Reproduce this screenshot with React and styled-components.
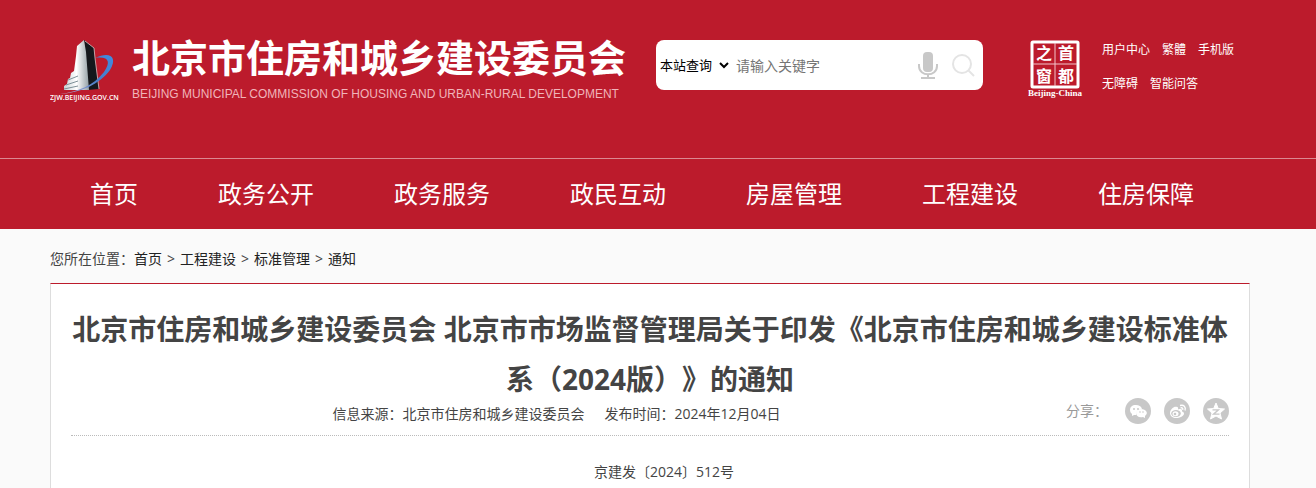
import styled, { createGlobalStyle } from "styled-components";

const navItems = ["首页", "政务公开", "政务服务", "政民互动", "房屋管理", "工程建设", "住房保障"];
const crumbs = ["首页", "工程建设", "标准管理", "通知"];
const quickLinks = [
    ["用户中心", "繁體", "手机版"],
    ["无障碍", "智能问答"],
];

function Logo() {
    return (
        <svg width="72" height="64" viewBox="0 0 72 64" role="img" aria-label="ZJW.BEIJING.GOV.CN">
            <defs>
                <linearGradient id="face" x1="0" y1="0" x2="1" y2="0">
                    <stop offset="0" stopColor="#c9d2d5" />
                    <stop offset="0.5" stopColor="#ffffff" />
                    <stop offset="1" stopColor="#93a0a5" />
                </linearGradient>
                <linearGradient id="orbit" x1="0" y1="1" x2="1" y2="0">
                    <stop offset="0" stopColor="#c3b6dc" />
                    <stop offset="0.5" stopColor="#4a7cc6" />
                    <stop offset="1" stopColor="#3f8be0" />
                </linearGradient>
            </defs>
            <path d="M34 0 L44 8 L45 18 L49 49 L37 50 Z" fill="#14181c" />
            <path d="M34 0 L36 12 L39 50 L14 50 L14 46 L17 44 L18 39 L20 38 L21 33 L24 31 L26 16 L27 6 Z" fill="url(#face)" />
            <path d="M35 1 L44 8 L45 18 L49 49" fill="none" stroke="#dcc3c5" strokeWidth="0.8" />
            <path d="M18 40 L28 36 M16 45 L28 41 M14 49 L28 46" stroke="#7e9198" strokeWidth="1" />
            <path
                d="M10 54 C28 52 44 45 54 32 C61 22 59 16 45 18 C60 11 68 17 60 30 C50 44 30 53 10 54 Z"
                fill="url(#orbit)"
            />
            <text x="0" y="60" fontSize="7" fontFamily="Open Sans, Liberation Sans, sans-serif" fontWeight="600" fill="#fff">
                ZJW.BEIJING.GOV.CN
            </text>
        </svg>
    );
}

function Seal() {
    return (
        <svg width="56" height="58" viewBox="0 0 56 58" role="img" aria-label="首都之窗">
            <rect x="4" y="2" width="46" height="45" rx="1" fill="none" stroke="#fff" strokeWidth="3" />
            <path d="M27 3 V46 M5 24 H49" stroke="#f3c5ca" strokeWidth="1" />
            <SealText x="8" y="19">之</SealText>
            <SealText x="30" y="19">首</SealText>
            <SealText x="8" y="42">窗</SealText>
            <SealText x="30" y="42">都</SealText>
            <SealCaption x="0" y="56">Beijing-China</SealCaption>
        </svg>
    );
}

function MicIcon() {
    return (
        <svg width="20" height="27" viewBox="0 0 20 27" aria-hidden="true">
            <rect x="5" y="0" width="10" height="20" rx="4" fill="#c8c8c8" />
            <path d="M1 12 V14 C1 25 19 25 19 14 V12" fill="none" stroke="#c8c8c8" strokeWidth="2" />
            <path d="M10 22 V26 M3 26 H17" stroke="#c8c8c8" strokeWidth="2" />
        </svg>
    );
}

function SearchIcon() {
    return (
        <svg width="23" height="23" viewBox="0 0 23 23" fill="none" stroke="#e4e4e4" strokeWidth="2" aria-hidden="true">
            <circle cx="10" cy="10" r="9" />
            <path d="M16 16 L22 22" />
        </svg>
    );
}

function WechatIcon() {
    return (
        <svg width="26" height="26" viewBox="0 0 26 26" aria-hidden="true">
            <path d="M11 7 C7 7 5 9 5 12 C5 14 6 15 7 16 L7 18 L9 17 H11 C11 13 14 11 17 11 C16 8 14 7 11 7 Z" fill="#fff" />
            <path d="M16 11 C13 11 11 13 11 15 C11 18 14 20 18 19 L20 20 L20 18 C24 15 21 11 16 11 Z" fill="#fff" />
            <g fill="#c8c8c8">
                <circle cx="9" cy="11" r="1" />
                <circle cx="13" cy="11" r="1" />
                <circle cx="15" cy="14" r="0.8" />
                <circle cx="18" cy="14" r="0.8" />
            </g>
        </svg>
    );
}

function WeiboIcon() {
    return (
        <svg width="26" height="26" viewBox="0 0 26 26" aria-hidden="true">
            <path
                d="M12 9 C11 8 6 11 6 15 C6 18 9 20 12 20 C16 20 20 18 20 15.5 C20 14 18 13.5 18 13.5 C18.5 11 17 10.5 14 11.5 C14.5 9.5 13.5 8.5 12 9 Z"
                fill="#fff"
            />
            <ellipse cx="12" cy="15.5" rx="4.8" ry="3.4" fill="#c8c8c8" />
            <ellipse cx="11.5" cy="15.7" rx="3" ry="2.5" fill="#fff" />
            <circle cx="11" cy="16" r="1.3" fill="#c8c8c8" />
            <path d="M16 7.5 C20 6.5 22 9 21 12.5 M16.5 9.8 C18.5 9.5 19.2 10.5 18.7 12" fill="none" stroke="#fff" strokeWidth="1.3" />
        </svg>
    );
}

function QzoneIcon() {
    return (
        <svg width="26" height="26" viewBox="0 0 26 26" aria-hidden="true">
            <path
                d="M13 5 L15.3 10.5 L21.5 11 L17 15 L18.5 21 L13 18 L7.5 21 L9 15 L4.5 11 L10.7 10.5 Z"
                fill="#fff"
                stroke="#fff"
                strokeLinejoin="round"
            />
            <path d="M9.5 11.8 H15.5 L10.5 16.2 H16.5" fill="none" stroke="#c8c8c8" strokeWidth="1.3" />
        </svg>
    );
}

function App() {
    return (
        <>
            <GlobalStyle />
            <Header>
                <TopBar>
                    <Brand href="#">
                        <Logo />
                        <BrandText>
                            <BrandName>北京市住房和城乡建设委员会</BrandName>
                            <BrandEnglish>BEIJING MUNICIPAL COMMISSION OF HOUSING AND URBAN-RURAL DEVELOPMENT</BrandEnglish>
                        </BrandText>
                    </Brand>
                    <SearchForm>
                        <ScopeSelect aria-label="查询范围">
                            <option>本站查询</option>
                        </ScopeSelect>
                        <SearchInput type="text" aria-label="关键字" placeholder="请输入关键字" />
                        <IconButton type="button" aria-label="语音">
                            <MicIcon />
                        </IconButton>
                        <IconButton type="submit" aria-label="搜索">
                            <SearchIcon />
                        </IconButton>
                    </SearchForm>
                    <Portal>
                        <SealLink href="#">
                            <Seal />
                        </SealLink>
                        <QuickLinks>
                            {quickLinks.map((row) => (
                                <QuickRow key={row[0]}>
                                    {row.map((label) => (
                                        <a href="#" key={label}>{label}</a>
                                    ))}
                                </QuickRow>
                            ))}
                        </QuickLinks>
                    </Portal>
                </TopBar>
                <Nav>
                    {navItems.map((label) => (
                        <NavLink href="#" key={label}>{label}</NavLink>
                    ))}
                </Nav>
            </Header>
            <Main>
                <Breadcrumb aria-label="您所在位置">
                    <span>您所在位置：</span>
                    {crumbs.map((label) => (
                        <Crumb href="#" key={label}>{label}</Crumb>
                    ))}
                </Breadcrumb>
                <Article>
                    <Title>北京市住房和城乡建设委员会 北京市市场监督管理局关于印发《北京市住房和城乡建设标准体系（2024版）》的通知</Title>
                    <InfoBar>
                        <Meta>
                            <span>信息来源：北京市住房和城乡建设委员会</span>
                            <span>发布时间：2024年12月04日</span>
                        </Meta>
                        <Share>
                            <ShareLabel>分享：</ShareLabel>
                            <ShareButton type="button" aria-label="微信"><WechatIcon /></ShareButton>
                            <ShareButton type="button" aria-label="微博"><WeiboIcon /></ShareButton>
                            <ShareButton type="button" aria-label="QQ空间"><QzoneIcon /></ShareButton>
                        </Share>
                    </InfoBar>
                    <DocNumber>京建发〔2024〕512号</DocNumber>
                </Article>
            </Main>
        </>
    );
}

const GlobalStyle = createGlobalStyle`
    * {
        box-sizing: border-box;
    }
    body {
        margin: 0;
        background: #fafafa;
        color: #444;
        font-family: "Open Sans", "Noto Sans CJK SC", sans-serif;
        font-size: 14px;
        line-height: 20px;
        text-spacing-trim: space-all;
    }
    a {
        color: inherit;
        text-decoration: none;
    }
    svg {
        display: block;
    }
`;
const Header = styled.header`
    background: #bc1b2c;
    color: #fff;
`;
const TopBar = styled.div`
    display: flex;
    align-items: flex-start;
    padding: 40px 66px 54px 50px;
`;
const Brand = styled.a`
    display: flex;
    flex: none;
    gap: 10px;
`;
const BrandText = styled.div`
    width: 494px;
    white-space: nowrap;
`;
const BrandName = styled.div`
    font-size: 38px;
    font-weight: 700;
    line-height: 34px;
`;
const BrandEnglish = styled.div`
    margin-top: 10px;
    color: #f0b4ba;
    font-family: "Liberation Sans", sans-serif;
    font-size: 12px;
    line-height: 20px;
`;
const SearchForm = styled.form`
    display: flex;
    align-items: center;
    flex: 0 1 327px;
    min-width: 0;
    height: 50px;
    margin-left: 30px;
    padding-right: 8px;
    border-radius: 8px;
    background: #fff;
`;
const ScopeSelect = styled.select`
    flex: none;
    width: 76px;
    padding: 0;
    border: 0;
    background: #fff;
    color: #000;
    font-family: inherit;
    font-size: 13px;
`;
const SearchInput = styled.input`
    flex: 1;
    min-width: 0;
    padding: 0 4px;
    border: 0;
    font-family: inherit;
    font-size: 14px;
`;
const IconButton = styled.button`
    flex: none;
    margin-left: 14px;
    padding: 0;
    border: 0;
    background: none;
`;
const Portal = styled.div`
    display: flex;
    flex: none;
    gap: 18px;
    margin-left: auto;
    padding-right: 16px;
`;
const SealLink = styled.a`
    display: block;
`;
const SealText = styled.text`
    fill: #fff;
    font-family: "Noto Sans CJK SC", sans-serif;
    font-size: 16px;
    font-weight: 700;
`;
const SealCaption = styled.text`
    fill: #fff;
    font-family: "Liberation Serif", serif;
    font-size: 9px;
    font-weight: 700;
`;
const QuickLinks = styled.div`
    display: flex;
    flex-direction: column;
    gap: 14px;
    font-size: 12px;
`;
const QuickRow = styled.div`
    display: flex;
    gap: 12px;
`;
const Nav = styled.nav`
    display: flex;
    padding: 0 66px 0 50px;
    border-top: 1px solid #dc8891;
`;
const NavLink = styled.a`
    padding: 0 40px;
    font-size: 24px;
    line-height: 70px;
    white-space: nowrap;
`;
const Main = styled.main`
    padding: 0 66px 0 50px;
`;
const Breadcrumb = styled.nav`
    padding: 20px 0 14px;
`;
const Crumb = styled.a`
    color: #222;

    & + &::before {
        content: ">";
        margin: 0 5px;
        color: #444;
    }
`;
const Article = styled.article`
    padding: 20px 20px 6px;
    border: 1px solid #ddd;
    border-top-color: #bc1b2c;
    border-bottom: 0;
    background: #fff;
`;
const Title = styled.h1`
    margin: 0 0 -6px;
    font-size: 28px;
    font-weight: 700;
    line-height: 50px;
    text-align: center;
`;
const InfoBar = styled.div`
    display: flex;
    align-items: flex-end;
    padding-bottom: 11px;
    border-bottom: 1px dotted #bbb;
`;
const Meta = styled.div`
    display: flex;
    flex: 1;
    justify-content: center;
    gap: 20px;
`;
const Share = styled.div`
    display: flex;
    flex: none;
    align-items: center;
    gap: 13px;
    padding-left: 24px;
`;
const ShareLabel = styled.span`
    margin-right: 4px;
    color: #999;
`;
const ShareButton = styled.button`
    padding: 0;
    border: 0;
    border-radius: 50%;
    background: #c8c8c8;
`;
const DocNumber = styled.p`
    margin: 26px 0 0;
    text-align: center;
    text-indent: 28px;
`;
export default App;
